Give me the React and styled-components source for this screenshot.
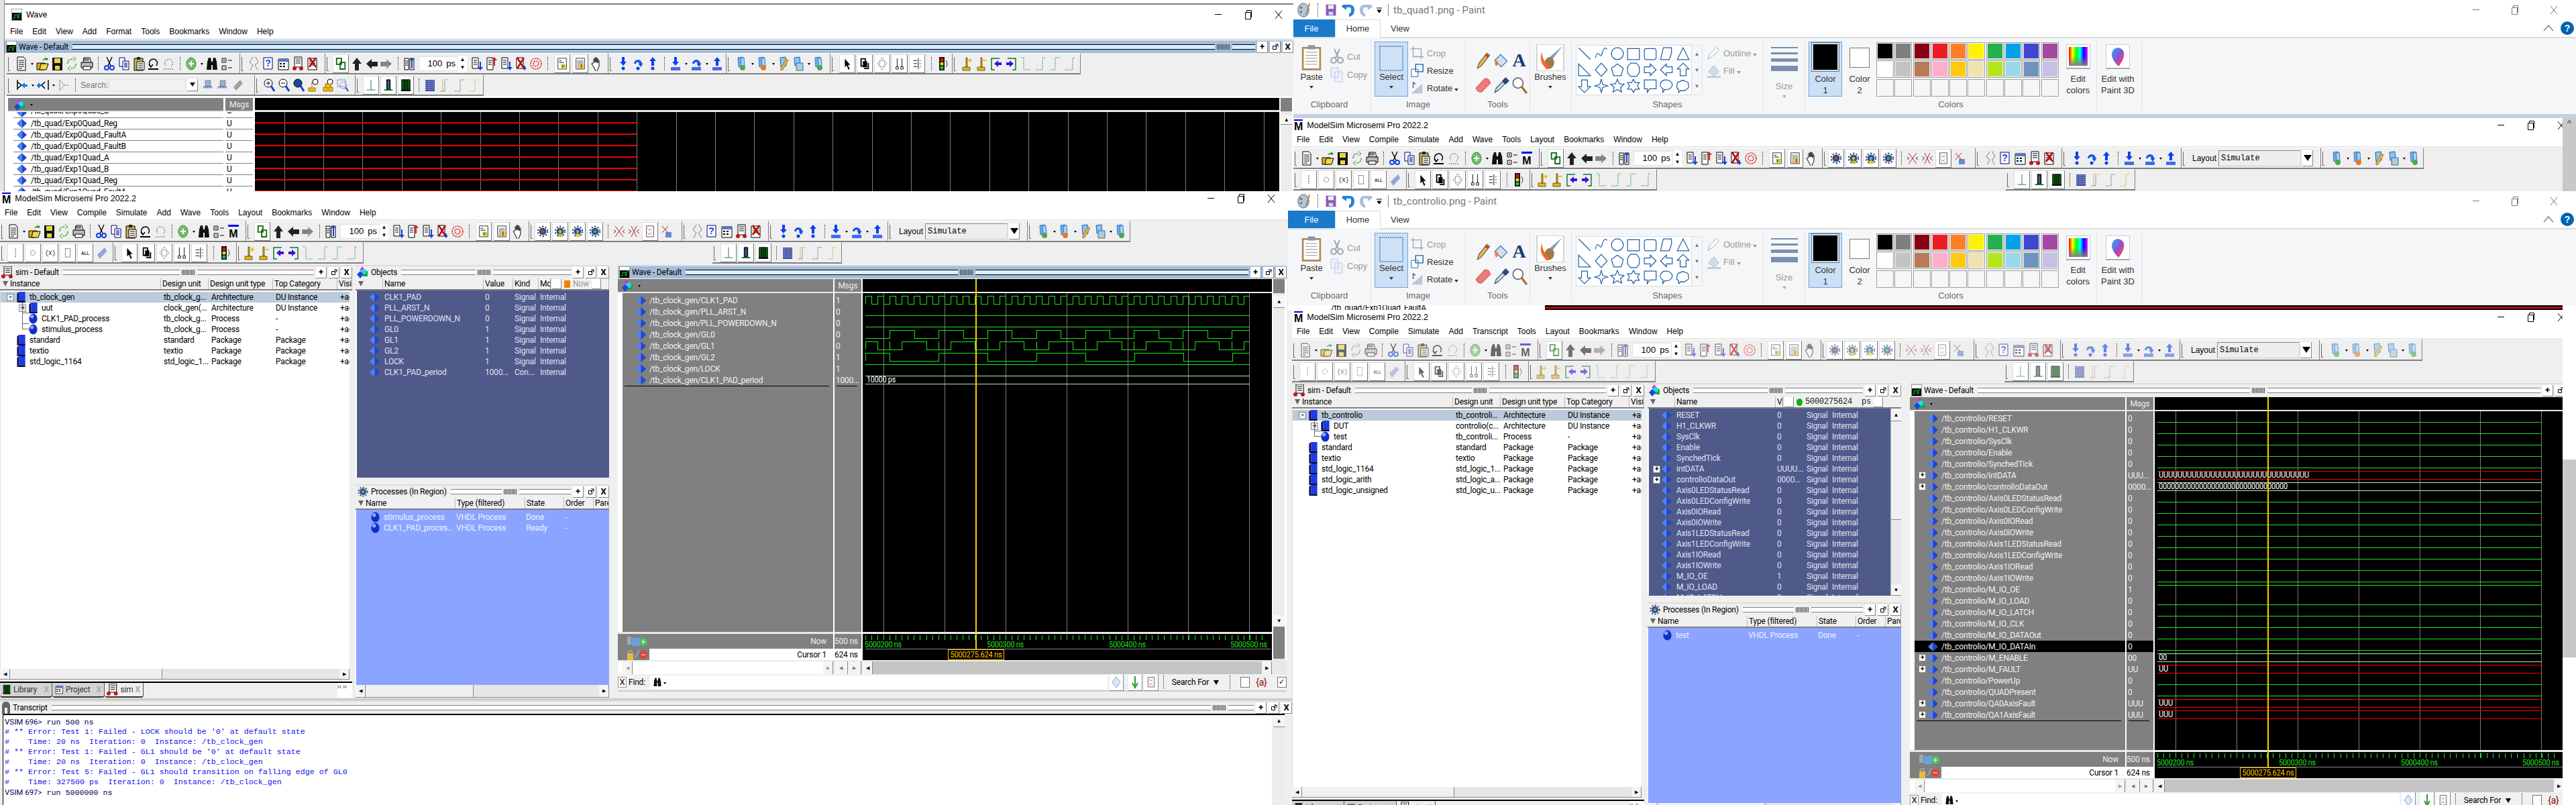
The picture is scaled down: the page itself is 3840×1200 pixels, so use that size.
import React from "react";
import styled, { createGlobalStyle, css } from "styled-components";

const Global = createGlobalStyle`
  html, body { margin: 0; padding: 0; background: #fff; }
  body { font-family: "Liberation Sans", Arial, sans-serif; font-size: 12px; color: #000; }
`;

// narrower list text, like the Windows UI font in the picture
const listFont = css`
  font-family: Roboto, "Liberation Sans", sans-serif;
  font-size: 12px;
  letter-spacing: -0.2px;
`;

/* ---------- toolbar icons (20x22 drawings) ---------- */
const gear = (c, b) => (
  <g>
    <circle cx="10" cy="11" r="6" fill="#2f4f7f" />
    <circle cx="10" cy="11" r="8" fill="none" stroke="#2f4f7f" strokeWidth="2.4" strokeDasharray="2.6 2.6" />
    <circle cx="10" cy="11" r="2.5" fill={c} />
    {b && <path d="M10 13l5 7H5z" fill={b} />}
  </g>
);
const step = (d, extra) => (
  <g>
    {d === "o" ? (
      <path d="M4 11a6 6 0 1 1 12 0l2-1-4 6-4-6 2 1a2.500 2.500 0 0 0-5 0z" fill="#1550e8" />
    ) : d === "d" ? (
      <path d="M10 14l-5-6h3V1h4v7h3z" fill="#0a3ff0" />
    ) : (
      <path d="M10 1l5 6h-3v7H8V7H5z" fill="#0a3ff0" />
    )}
    {extra ? <path d="M3 16h14v5H3z" fill="#0a3ff0" opacity=".75" /> : <circle cx="10" cy="18" r="2.5" fill="#0a3ff0" />}
  </g>
);
const flag = (p) => (
  <g fill="#e8b800" stroke="#111" strokeWidth=".6">
    <path d="M9 2h2v14H9z" />
    <path d="M4 16h11v5H4z" />
    <path d={p} fill="none" stroke="#e8b800" strokeWidth="1.6" />
  </g>
);
const bookmark = (badge) => (
  <g>
    <path d="M4 2l7-1 1 14-7 1z" fill="#6eb0ea" stroke="#1c5fb0" strokeWidth=".8" />
    <path d="M8 3l5-1 1 13-5 1z" fill="#a9d2f5" stroke="#1c5fb0" strokeWidth=".8" />
    <circle cx="11" cy="17" r="4" fill={badge} />
  </g>
);
const dashes = (c, d) => <path d={d} fill="none" stroke={c} strokeDasharray="1.5 1.5" />;

const icons = {
  doc: <g><path d="M4 1h9l3 3v17H4z" fill="#fff" stroke="#000" /><path d="M6 6h8M6 9h8M6 12h8M6 15h8M6 18h5" stroke="#000" /></g>,
  open: <g><path d="M2 10h12l-2 10H2z" fill="#d8b018" stroke="#000" /><path d="M6 20l2-9h11l-3 9z" fill="#f6d648" stroke="#000" /><path d="M10 7q2-5 6-4l-1-2 4 3-4 3 1-2q-3-1-6 2z" fill="#1a8f1a" /></g>,
  save: <g><path d="M3 2h15v19H3z" fill="#111" /><path d="M6 3h9v7H6z" fill="#e8d44a" /><path d="M7 14h7v6H7z" fill="#e8d44a" /></g>,
  reload: <g fill="none" stroke="#55a94f" strokeWidth="2" strokeDasharray="2 1"><path d="M4 11q0-7 8-7" /><path d="M16 11q0 7-8 7" /><path d="M12 1l4 3-4 3M8 15l-4 3 4 3" strokeWidth="1.5" /></g>,
  print: <g><path d="M6 2h9l2 7H5z" fill="#fff" stroke="#000" /><path d="M2 9h17v8H2z" fill="#bbb" stroke="#000" /><path d="M5 15h11v5H5z" fill="#fff" stroke="#000" /><path d="M5 4h9M5 6h9" stroke="#000" /></g>,
  cut: <g fill="none"><path d="M6 1l6 13M14 1l-6 13" stroke="#000" strokeWidth="1.4" /><circle cx="6" cy="17" r="3" stroke="#1240e0" strokeWidth="2" /><circle cx="14" cy="17" r="3" stroke="#1240e0" strokeWidth="2" /></g>,
  copy: <g><path d="M3 2h8v13H3z" fill="#fff" stroke="#000080" /><path d="M8 7h9v13H8z" fill="#fff" stroke="#000080" /><path d="M10 10h5M10 12h5M10 14h5M10 16h5" stroke="#000080" /></g>,
  paste: <g><path d="M3 3h13v18H3z" fill="#c8b050" stroke="#000" /><path d="M7 1h5v4H7z" fill="#222" /><path d="M7 8h11v12H7z" fill="#fff" stroke="#000" /><path d="M9 11h7M9 14h7M9 17h7" stroke="#000" /></g>,
  undo: <g fill="none" stroke="#000" strokeWidth="1.5"><path d="M6 15a6 6 0 1 1 8-1" /><path d="M2 19h15" strokeWidth="2" /><path d="M3 12l3 4 3-4" /></g>,
  redo: <g fill="none" stroke="#333" strokeDasharray="1.5 1.5"><path d="M14 15a6 6 0 1 0-8-1" /><path d="M3 19h15" /></g>,
  plusc: <g><ellipse cx="10" cy="11" rx="7" ry="9" fill="#72c06a" stroke="#2f8a2a" /><path d="M6 11h8M10 7v8" stroke="#fff" strokeWidth="2" /></g>,
  binoc: <g fill="#111"><path d="M3 8l2-6h3l1 6v12H2z" /><path d="M17 8l-2-6h-3l-1 6v12h7z" /><path d="M9 8h2v5H9z" /></g>,
  hier: <g fill="none" stroke="#000"><path d="M3 3h6v6H3zM3 14h6v6H3zM12 6h6M12 17h6M5 6h2M6 5v2M5 17h2" /></g>,
  mlogo: <g><path d="M2 1h16v3H2z" fill="#0000e0" /><text x="10" y="20" fontSize="16" fontWeight="700" textAnchor="middle" fontFamily="Liberation Sans">M</text></g>,
  chain: <g fill="none" stroke="#0a6a0a" strokeWidth="2"><path d="M3 2h8v10H3z" /><path d="M9 9h8v11H9z" /></g>,
  up: <path d="M10 2l7 9h-4v10H7V11H3z" fill="#222" />,
  left: <path d="M2 11l8-7v4h9v7h-9v4z" fill="#222" />,
  right: <g><path d="M18 11l-8-7v4H1v7h9v4z" fill="#999" /><path d="M2 9h14M2 11h16M2 13h14" stroke="#444" strokeDasharray="1 1" /></g>,
  split: <g><path d="M3 3h6v17H3z" fill="#fff" stroke="#000" /><path d="M11 3h6v17h-6z" fill="#fff" stroke="#000" /><path d="M4 7h4M4 10h4M4 13h4" stroke="#000" /><path d="M14 2l3 4h-6zM13 6h2v12h-2z" fill="#1240e0" /></g>,
  bd: <g><path d="M3 2h9v16H3z" fill="#fff" stroke="#000" /><path d="M5 6h5M5 9h5M5 12h5" stroke="#000" /><path d="M14 8h2v8h3l-4 5-4-5h3z" fill="#1240e0" /></g>,
  bu: <g><path d="M3 2h9v18H3z" fill="#fff" stroke="#000" /><path d="M5 6h5M5 9h5M5 12h5" stroke="#000" /><path d="M14 1l4 5h-3v8h-2V6h-3z" fill="#e02020" /></g>,
  bx: <g><path d="M3 2h10v16H3z" fill="#fff" stroke="#000" /><path d="M4 2l10 16M14 2L4 18" stroke="#c00000" strokeWidth="2.4" /><path d="M14 14h2v3h2l-3 4-3-4h2z" fill="#1240e0" /></g>,
  rd: <g fill="none" stroke="#e02020" strokeWidth="1.5" strokeDasharray="2 1"><circle cx="10" cy="11" r="8" /><circle cx="10" cy="11" r="4" /></g>,
  hat1: <g><path d="M3 2h14v18H3z" fill="#fff" stroke="#222" /><path d="M5 6h4M5 9h8" stroke="#000" /><path d="M8 12h8v6H8z" fill="#e6c020" /><path d="M10 13h2v5h-2z" fill="#28a028" /></g>,
  hat2: <g><path d="M3 2h14v18H3z" fill="#fff" stroke="#222" /><path d="M5 5h10v14H5z" fill="#888" opacity=".6" /><path d="M8 12h8v6H8z" fill="#e6d020" /><path d="M11 12h2v6h-2z" fill="#d03030" /></g>,
  hand: <g><path d="M6 10V4h2v5-7h2v7-6h2v7-4h2v9l-4 9-4-8-3-5 2-1z" fill="#fff" stroke="#000" /></g>,
  gr: gear("#c23838"),
  gy: gear("#e0c020", "#d8b818"),
  gy2: gear("#7fa0c0", "#e8c820"),
  gg: gear("#3fb060"),
  xx1: <g fill="none" stroke="#c02020"><path d="M4 3l6 8 6-8M4 19l6-8 6 8" /><path d="M2 9l3 2-3 2M18 9l-3 2 3 2" stroke="#444" /></g>,
  xx2: <g fill="none" stroke="#c02020"><path d="M6 3l4 8-4 8M14 3l-4 8 4 8" /><path d="M2 8l4 3-4 3M18 8l-4 3 4 3" stroke="#444" /></g>,
  docx: <g><path d="M4 2h12v18H4z" fill="#fff" stroke="#444" /><path d="M6 6l7 4M13 6l-7 4M6 13l7 4M13 13l-7 4" stroke="#c02020" strokeDasharray="1 1" /></g>,
  hatx: <g><path d="M4 3l9 10M13 3L4 13" stroke="#c02020" /><path d="M9 12h9v8H9z" fill="#3060c0" opacity=".7" /></g>,
  sig: <g fill="none" stroke="#333" strokeDasharray="1.5 1"><path d="M9 1l-5 8 5 4-4 8M13 1l4 8-5 4 5 8" /></g>,
  help: <g><path d="M3 2h13v17H3z" fill="#fff" stroke="#000080" /><text x="9.500" y="15" fontSize="14" fontWeight="700" fill="#1240e0" textAnchor="middle" fontFamily="Liberation Sans">?</text></g>,
  cal: <g><path d="M3 4h15v16H3z" fill="#fff" stroke="#000" /><path d="M3 4h15v4H3z" fill="#5a78c8" /><path d="M5 11h3M10 11h3M5 15h3M10 15h3" stroke="#000" strokeWidth="2" /></g>,
  run: <g><path d="M5 1h11v15H5z" fill="#fff" stroke="#000" /><path d="M7 4h7M7 7h7M7 10h7" stroke="#000" /><circle cx="5" cy="18" r="3" fill="#c01818" /><circle cx="15" cy="18" r="3" fill="#c01818" /></g>,
  delx: <g><path d="M3 3h13v17H3z" fill="#fff" stroke="#000" /><path d="M5 7h9M5 10h9M5 13h9" stroke="#000" /><path d="M5 2l10 14M15 2L5 16" stroke="#c00000" strokeWidth="2.4" /></g>,
  stepd: step("d"), stepo: step("o"), stepu: step("u"),
  stepd2: step("d", true), stepo2: step("o", true), stepu2: step("u", true),
  pl1: bookmark("#4aa84a"), pl2: bookmark("#e87820"), pl5: bookmark("#4aa84a"),
  pl3: <g><path d="M5 2l8-1 1 13-8 2z" fill="#8cc4f0" stroke="#1c5fb0" /><path d="M14 4l3 2-8 14-3 1 0-3z" fill="#e8b848" stroke="#a07010" /></g>,
  pl4: <g><path d="M4 2l8-1 1 12-8 1z" fill="#8cc4f0" stroke="#1c5fb0" /><path d="M7 10h10v11H7z" fill="#a8c8f0" stroke="#3a6ab0" /><path d="M9 17h6v3H9z" fill="#c0e060" /></g>,
  arrow: <path d="M6 3l9 10-4 0 3 7-2 1-3-7-3 3z" fill="#000" />,
  bracket: <g fill="none" stroke="#000" strokeWidth="2"><path d="M4 3h7v12H4z" /><path d="M8 8h5v8H8z" fill="#000" /><path d="M16 10v9H9" /></g>,
  move: <g fill="none" stroke="#333" strokeDasharray="1 1"><path d="M10 1l4 5h-8zM10 21l4-5H6zM2 11l4-4v8zM18 11l-4-4v8z" /></g>,
  bars: <g fill="none" stroke="#000"><path d="M6 2v14M14 2v14M4 16h4v4H4zM12 16h4v4h-4z" /></g>,
  grid: <g fill="none" stroke="#000"><path d="M12 2v18M4 6h6M4 11h6M4 16h6" /><path d="M14 6h3M14 11h3M14 16h3" strokeDasharray="1 1" /></g>,
  traffic: <g><path d="M5 1h8v20H5z" fill="#111" /><circle cx="9" cy="5" r="2.6" fill="#e01010" /><circle cx="9" cy="11" r="2.6" fill="#e0d020" /><circle cx="9" cy="17" r="2.6" fill="#20c030" /><path d="M15 6q4 5 0 10" fill="none" stroke="#333" /></g>,
  flagp: flag("M11 6h7M15 3v6"),
  flagm: flag("M11 6h7"),
  bl: <g><path d="M15 3H3v17h5" fill="none" stroke="#0a7a2a" strokeWidth="1.5" /><path d="M7 11l6-5v3h5v4h-5v3z" fill="#3a10d8" /></g>,
  br: <g><path d="M5 3h12v17h-5" fill="none" stroke="#0a7a2a" strokeWidth="1.5" /><path d="M14 11L8 6v3H3v4h5v3z" fill="#3a10d8" /></g>,
  d1: dashes("#0a8a2a", "M3 2h4v18h10"),
  d2: dashes("#0a8a2a", "M17 2h-4v18H3"),
  d3: dashes("#0a8a2a", "M3 20h7V2h7"),
  d4: dashes("#0a8a2a", "M3 20h11V2h3"),
  pin: <path d="M10 4v14" stroke="#000" strokeDasharray="2 2" />,
  circ: <circle cx="10" cy="11" r="4" fill="none" stroke="#333" strokeDasharray="1.5 1" />,
  curly: <text x="10" y="15" fontSize="10" textAnchor="middle" fontFamily="Liberation Mono" fill="#222">{"{X}"}</text>,
  rectd: <path d="M6 4h8v14H6z" fill="none" stroke="#333" strokeDasharray="1.5 1" />,
  all: <text x="10" y="14" fontSize="7" fontWeight="700" textAnchor="middle" fontFamily="Liberation Sans" fill="#333">ALL</text>,
  hatch: <g><path d="M4 14L15 3l3 5-10 12z" fill="#8aa8e8" /><path d="M5 13l10-9M7 15l10-9M9 18l9-9" stroke="#d080a0" strokeDasharray="1 1" /></g>,
  ins: <g><path d="M3 3v15M3 6l6 5-6 5z" stroke="#000" strokeWidth="1.5" fill="none" /><path d="M9 11l5-4v3h4v3h-4v3z" fill="#0a7af0" /></g>,
  del: <g><path d="M18 3v15" stroke="#000" strokeWidth="1.5" /><path d="M13 6l-5 5 5 5" stroke="#000" strokeWidth="1.5" fill="none" /><path d="M8 11l-5-4v3H1v3h2v3z" fill="#0a7af0" /></g>,
  addd: <g fill="none" stroke="#444" strokeDasharray="1 1"><path d="M4 3l7 8-7 8zM11 11h7" /></g>,
  srch1: <g><path d="M6 4h8v9H6z" fill="#9ab0d0" stroke="#445" strokeDasharray="1 1" /><path d="M3 14h14" stroke="#2a60d0" strokeWidth="3" strokeDasharray="1 1" /></g>,
  srch3: <g><path d="M4 14L14 3l4 5L8 19z" fill="#a8a8a8" /><path d="M5 14l9-9M7 17l9-9" stroke="#555" strokeDasharray="1 1" /></g>,
  zin: <g><circle cx="9" cy="8" r="6" fill="#fff" stroke="#000" /><path d="M6 8h6M9 5v6" stroke="#000" /><path d="M13 12l5 8" stroke="#1240e0" strokeWidth="3" /></g>,
  zout: <g><circle cx="9" cy="8" r="6" fill="#fff" stroke="#000" /><path d="M6 8h6" stroke="#000" /><path d="M13 12l5 8" stroke="#1240e0" strokeWidth="3" /></g>,
  zfull: <g><circle cx="9" cy="8" r="6" fill="#1a4aa0" stroke="#000" /><path d="M13 12l5 8" stroke="#1240e0" strokeWidth="3" /></g>,
  zc1: <g><circle cx="13" cy="6" r="4" fill="#fff" stroke="#000" /><path d="M8 6v9M3 15h10v5H3z" fill="#f0c000" stroke="#a07000" /></g>,
  zc2: <g><circle cx="13" cy="6" r="4" fill="#fff" stroke="#000" /><path d="M3 14h6v6H3zM11 14h6v6h-6zM6 14V9h8v5" fill="#f0c000" stroke="#a07000" /></g>,
  zs: <g fill="none" stroke="#1240a0" strokeDasharray="1 1"><path d="M2 3h12v10H2z" /><circle cx="11" cy="11" r="5" /><path d="M14 14l4 6" strokeDasharray="none" strokeWidth="2" /></g>,
  lines1: <path d="M10 2v17M3 19h14" stroke="#0a7a2a" />,
  lines2: <g><path d="M7 2h6v17H7z" fill="#1a1a70" stroke="#000" /><path d="M9 4h2v13H9z" fill="#3a8a40" /><path d="M3 19h14" stroke="#0a7a2a" strokeWidth="2" /></g>,
  lines3: <g><path d="M3 2h14v17H3z" fill="#0a5a10" stroke="#000" /><path d="M7 2v17M10 2v17M13 2v17" stroke="#000" /><path d="M2 20h16" stroke="#000" strokeWidth="2" /></g>,
  dith: <g><path d="M3 3h14v17H3z" fill="#3a4aa0" /><path d="M3 5h14M3 8h14M3 11h14M3 14h14M3 17h14" stroke="#fff" strokeDasharray="1 1" /></g>,
  w1: <g><path d="M3 20h4V3h9" fill="none" stroke="#c0a000" strokeDasharray="1.5 1" /><path d="M6 20h4V5" fill="none" stroke="#2040a0" strokeDasharray="1 1" /></g>,
  w2: dashes("#0a7a2a", "M3 20h8V3h6"),
  w3: dashes("#b8a800", "M3 20h8V3h6"),
};

const I = ({ n, s = 20 }) => (
  <svg width={s} height={(s * 22) / 20} viewBox="0 0 20 22">
    {icons[n]}
  </svg>
);

/* small drawings used in lists and panels */
const Diamond = () => (
  <svg width="15" height="14" viewBox="0 0 15 14">
    <path d="M7.500 0L0 7l7.500 7z" fill="#4c82f4" />
    <path d="M7.500 0L15 7l-7.500 7z" fill="#2246c8" />
  </svg>
);
const BlockIco = () => (
  <svg width="13" height="16" viewBox="0 0 13 17">
    <path d="M0 3l3-3v14l-3 3z" fill="#101050" />
    <path d="M3 0h10v14H3z" fill="#1c3ce8" />
    <path d="M0 17l3-3h10v3z" fill="#0a0a40" />
  </svg>
);
const BallIco = () => (
  <svg width="13" height="16" viewBox="0 0 13 17">
    <ellipse cx="6.500" cy="8.500" rx="6.500" ry="8" fill="#1030c8" />
    <ellipse cx="4.500" cy="5" rx="3" ry="3" fill="#8aa4ff" />
  </svg>
);
const ObjsIco = () => (
  <svg width="18" height="18" viewBox="0 0 18 18">
    <path d="M8 0l4 6H4z" fill="#e020e0" />
    <path d="M9 7h7v8H9z" fill="#18a838" />
    <circle cx="10" cy="8" r="4" fill="#20d8e8" />
    <path d="M5 7l5 5-5 6-5-6z" fill="#1848e0" />
  </svg>
);
const WaveIco = () => (
  <svg width="16" height="18" viewBox="0 0 16 18">
    <path d="M0 0h16v18H0z" fill="#fff" stroke="#444" />
    <path d="M1 6h14v11H1z" fill="#000" />
    <path d="M2 14h3V9h4v5h2V8h3" fill="none" stroke="#18d838" />
  </svg>
);
const SimIco = () => (
  <svg width="18" height="18" viewBox="0 0 18 18">
    <path d="M4 0h11v13H4z" fill="#fff" stroke="#000" />
    <path d="M6 3h7M6 6h7M6 9h7" stroke="#000" />
    <circle cx="3" cy="15" r="3" fill="#c01818" />
    <circle cx="14" cy="15" r="3" fill="#c01818" />
  </svg>
);
const GearIco = () => (
  <svg width="18" height="18" viewBox="0 0 20 22">
    {gear("#8aa")}
  </svg>
);
const PersonIco = () => (
  <svg width="14" height="18" viewBox="0 0 14 18">
    <path d="M1 18V6q0-6 6-6t6 6v12H9V9H5v9z" fill="#666" />
  </svg>
);

/* ---------- desktop and windows ---------- */
const Desktop = styled.div`
  position: relative;
  width: 3840px;
  height: 1200px;
  overflow: hidden;
  background: #fff;
`;
const Win = styled.div`
  position: absolute;
  left: ${(p) => p.$x}px;
  top: ${(p) => p.$y}px;
  width: ${(p) => p.$w}px;
  height: ${(p) => p.$h}px;
  background: ${(p) => p.$bg || "#fff"};
  display: flex;
  flex-direction: column;
  overflow: hidden;
`;
const Sliver = styled.div`
  position: absolute;
  left: 0;
  top: 0;
  width: 7px;
  height: 285px;
  background: #e4e4e4;
  border-right: 1px solid #888;
  box-sizing: border-box;
`;
const SideStrip = styled.div`
  position: absolute;
  left: 3820px;
  top: ${(p) => p.$y}px;
  width: 20px;
  height: ${(p) => p.$h}px;
  background: ${(p) => p.$c};
  color: #333;
  font-size: 13px;
  text-align: center;
`;
const TitleRow = styled.div`
  flex: none;
  height: ${(p) => p.$h}px;
  display: flex;
  align-items: center;
  padding-left: ${(p) => p.$pl}px;
  padding-right: ${(p) => p.$pr}px;
  background: #fff;
  border-top: ${(p) => (p.$line ? "2px solid #808080" : "none")};
`;
const TitleText = styled.span`
  font-size: 12.500px;
  margin-left: 6px;
  white-space: nowrap;
`;
const MLogo = styled.span`
  font-weight: 700;
  font-size: 16px;
  line-height: 17px;
  border-top: 2px solid #0000e0;
`;
const Controls = styled.div`
  margin-left: auto;
  display: flex;
`;
const CtlBtn = styled.span`
  width: ${(p) => p.$w}px;
  display: flex;
  justify-content: center;
`;
const WinControls = ({ w = 45, c = "#000" }) => (
  <Controls>
    <CtlBtn $w={w}>
      <svg width="12" height="12"><path d="M1 6.500h10" stroke={c} /></svg>
    </CtlBtn>
    <CtlBtn $w={w}>
      <svg width="12" height="14"><path d="M1.500 3.500h8v10h-8zM3.500 3.500v-3h7v10h-1" fill="none" stroke={c} /></svg>
    </CtlBtn>
    <CtlBtn $w={w}>
      <svg width="12" height="14"><path d="M1 1l10 12M11 1L1 13" stroke={c} /></svg>
    </CtlBtn>
  </Controls>
);
const MenuRow = styled.div`
  flex: none;
  height: ${(p) => p.$h}px;
  display: flex;
  align-items: center;
  gap: 14px;
  padding-left: ${(p) => p.$pl}px;
  background: #fff;
  border-bottom: 2px solid #e8e8e8;
  box-sizing: border-box;
`;

/* ---------- toolbars ---------- */
const ToolRow = styled.div`
  flex: none;
  height: 32px;
  display: flex;
  padding-left: ${(p) => p.$pl || 0}px;
  background: #efefef;
`;
const ToolGroup = styled.div`
  flex: none;
  width: ${(p) => p.$w}px;
  margin-left: ${(p) => p.$ml || 0}px;
  box-sizing: border-box;
  padding-left: ${(p) => p.$pad}px;
  display: flex;
  align-items: center;
  position: relative;
  border-right: 1px solid #808080;
  border-bottom: 2px solid #808080;
  border-top: 1px solid #fff;
  &::before {
    content: "";
    position: absolute;
    left: 2px;
    top: 5px;
    bottom: 3px;
    width: 2px;
    border-left: 1px solid #666;
    border-bottom: 1px solid #666;
  }
  svg { opacity: ${(p) => (p.$dim ? 0.6 : 1)}; }
`;
const Slot = styled.span`
  flex: none;
  width: ${(p) => p.$w || 22}px;
  height: 24px;
  display: flex;
  align-items: center;
  justify-content: center;
`;
const BoxSlot = styled(Slot)`
  width: 26px;
  & > div {
    width: 22px;
    height: 26px;
    background: #fff;
    display: flex;
    align-items: center;
    justify-content: center;
    border-right: 1px solid #777;
    border-bottom: 1px solid #777;
    border-top: 1px solid #ddd;
    border-left: 1px solid #ddd;
  }
`;
const Sep = styled.span`
  flex: none;
  width: ${(p) => p.$w || 12}px;
  height: 20px;
  display: flex;
  justify-content: center;
  &::after {
    content: "";
    border-left: 1px dotted #333;
  }
`;
const Gap = styled.span`
  flex: none;
  width: ${(p) => p.$w}px;
`;
const Drop = styled.span`
  flex: none;
  width: 9px;
  display: flex;
  justify-content: center;
  &::after {
    content: "";
    border-left: 2.500px solid transparent;
    border-right: 2.500px solid transparent;
    border-top: 3px solid #000;
    margin-top: 2px;
  }
`;
const TimeBox = styled.span`
  flex: none;
  width: 59px;
  height: 22px;
  background: #fff;
  box-sizing: border-box;
  border: 1px solid #e0e0e0;
  display: flex;
  align-items: center;
  justify-content: flex-end;
  padding-right: 3px;
  font-size: 13px;
  gap: 6px;
`;
const Spin = styled.span`
  flex: none;
  width: 13px;
  height: 24px;
  display: flex;
  flex-direction: column;
  align-items: center;
  justify-content: space-around;
  background: #fff;
  font-size: 8px;
  line-height: 10px;
`;
const LayoutLabel = styled.span`
  margin-left: 16px;
  margin-right: 5px;
  font-size: 12px;
  width: 34px;
`;
const LayoutBox = styled.span`
  flex: none;
  width: 123px;
  height: 24px;
  box-sizing: border-box;
  border: 1px solid #ccc;
  border-top-color: #888;
  border-left-color: #888;
  background: #eee;
  font-family: "Liberation Mono", monospace;
  font-size: 12px;
  display: flex;
  align-items: center;
  padding-left: 3px;
`;
const DropBtn = styled.span`
  flex: none;
  width: 16px;
  height: 24px;
  margin-left: 2px;
  background: #fff;
  box-sizing: border-box;
  border-right: 1px solid #888;
  border-bottom: 1px solid #888;
  display: flex;
  align-items: center;
  justify-content: center;
  &::after {
    content: "";
    border-left: 6px solid transparent;
    border-right: 6px solid transparent;
    border-top: 9px solid #000;
  }
`;
const SearchLabel = styled.span`
  color: #777;
  margin-left: 2px;
  width: 42px;
`;
const SearchBox = styled.span`
  flex: none;
  width: 115px;
  height: 18px;
  background: #f2f2f2;
  border: 1px solid #ddd;
  box-sizing: border-box;
`;
const SearchDrop = styled(DropBtn)`
  width: 16px;
  height: 18px;
  margin-right: 4px;
  &::after {
    border-left-width: 4px;
    border-right-width: 4px;
    border-top-width: 6px;
  }
`;

// "name" icon, "*name" boxed icon, "|" separator, "v" dropdown, "_n" spacer
const Item = ({ t }) => {
  if (t === "|") return <Sep />;
  if (t === "v") return <Drop />;
  if (t[0] === "_") return <Gap $w={Number(t.slice(1))} />;
  if (t === "time")
    return (
      <>
        <TimeBox><span>100</span><span>ps</span></TimeBox>
        <Spin><span>▲</span><span>▼</span></Spin>
      </>
    );
  if (t === "layout")
    return (
      <>
        <LayoutLabel>Layout</LayoutLabel>
        <LayoutBox>Simulate</LayoutBox>
        <DropBtn />
      </>
    );
  if (t === "search")
    return (
      <>
        <SearchLabel>Search:</SearchLabel>
        <SearchBox />
        <SearchDrop />
      </>
    );
  if (t[0] === "*")
    return <BoxSlot><div><I n={t.slice(1)} s={18} /></div></BoxSlot>;
  return <Slot><I n={t} /></Slot>;
};
const Tools = ({ rows, pl, dim }) =>
  rows.map((groups, r) => (
    <ToolRow key={r} $pl={pl}>
      {groups.map((g, i) => (
        <ToolGroup key={i} $w={g[0]} $pad={g[1]} $ml={g[3]} $dim={dim}>
          {g[2].split(" ").map((t, k) => <Item key={k} t={t} />)}
        </ToolGroup>
      ))}
    </ToolRow>
  ));

const commonG2 = "*chain up left right | split _3 time _4 bd bu bd bx rd | _3 *hat1 _1 *hat2 hand";
const commonG5 = "stepd stepo stepu | stepd2 v stepo2 v stepu2";
const mainTools = [
  [
    [367, 9, "doc v open save reload print | cut copy paste undo redo | plusc v binoc hier mlogo"],
    [422, 11, commonG2],
    [228, 7, "*gr *gy *gy2 *gg | xx1 xx2 *docx hatx"],
    [129, 11, "sig help cal run delx"],
    [178, 11, commonG5],
    [208, 0, "layout"],
    [153, 13, "pl1 v pl2 v pl3 pl4 v pl5"],
  ],
  [
    [169, 10, "*pin *circ *curly *rectd *all hatch"],
    [184, 11, "*arrow *bracket *move *bars *grid _2 | traffic"],
    [189, 7, "flagp flagm bl br d1 d2 d3 d4"],
    [193, 11, "*lines1 *lines2 *lines3 | dith w1 w2 w3", 520],
  ],
];
const waveTools = [
  [
    [348, 11, "doc v open save reload print | cut copy paste undo redo | plusc v binoc hier"],
    [127, 9, "sig help cal run delx"],
    [422, 10, commonG2],
    [176, 11, commonG5],
    [155, 12, "pl1 v pl2 v pl3 pl4 v pl5"],
    [182, 12, "*arrow *bracket *move *bars *grid _2 | traffic"],
    [191, 10, "flagp flagm bl br d1 d2 d3 d4"],
  ],
  [
    [370, 12, "ins v del v addd | search srch1 srch1 srch3"],
    [150, 10, "zin zout zfull zc1 zc2 zs"],
    [191, 10, "*lines1 *lines2 *lines3 | dith w1 w2 w3"],
  ],
];

/* ---------- dock panels ---------- */
const PanelHeadBar = styled.div`
  flex: none;
  height: 20px;
  display: flex;
  align-items: center;
  gap: 3px;
  background: ${(p) => (p.$active ? "#a3bcd8" : "#efefef")};
  border-top: 2px solid ${(p) => (p.$active ? "#d0dcea" : "#ddd")};
  box-sizing: border-box;
  padding-left: 2px;
  ${listFont}
`;
const HeadTitle = styled.span`
  white-space: nowrap;
  margin-right: 3px;
`;
const GripLines = styled.span`
  flex: ${(p) => p.$f || 1};
  height: 6px;
  border-top: 1px solid ${(p) => (p.$active ? "#000" : "#808080")};
  border-bottom: 1px solid ${(p) => (p.$active ? "#000" : "#808080")};
  background: ${(p) => (p.$active ? "#d8f0ff" : "#fff")};
`;
const GripDots = styled.span`
  flex: none;
  width: 20px;
  height: 8px;
  background: repeating-linear-gradient(90deg, #444 0 1px, transparent 1px 2px);
`;
const HeadBtn = styled.span`
  flex: none;
  width: 15px;
  height: 16px;
  background: #fff;
  display: flex;
  align-items: center;
  justify-content: center;
  font-size: 13px;
  font-weight: 700;
  line-height: 14px;
  border-right: 1px solid #888;
  border-bottom: 1px solid #888;
`;
const PanelHead = ({ icon, title, active, f1 = 1, f2 = 1 }) => (
  <PanelHeadBar $active={active}>
    {icon}
    <HeadTitle>{title}</HeadTitle>
    <GripLines $active={active} $f={f1} />
    <GripDots />
    <GripLines $active={active} $f={f2} />
    <HeadBtn>+</HeadBtn>
    <HeadBtn>
      <svg width="10" height="10"><path d="M1.500 3.500h5v5h-5zM5 1h4v4M9 1L5 5" fill="none" stroke="#000" /></svg>
    </HeadBtn>
    <HeadBtn>X</HeadBtn>
  </PanelHeadBar>
);

const ColHeadRow = styled.div`
  flex: none;
  height: 16px;
  display: grid;
  grid-template-columns: ${(p) => p.$cols};
  position: relative;
  background: #f0f0f0;
  border-bottom: 2px solid #808080;
  overflow: hidden;
  ${listFont}
`;
const ColCell = styled.span`
  padding-left: 2px;
  line-height: 16px;
  white-space: nowrap;
  overflow: hidden;
  border-right: 1px solid #bbb;
  position: relative;
`;
const FirstCell = styled(ColCell)`
  padding-left: 15px;
  &::before {
    content: "";
    position: absolute;
    left: 4px;
    top: 4px;
    border-left: 4px solid transparent;
    border-right: 4px solid transparent;
    border-top: 8px solid #666;
  }
`;

/* sim panel */
const simCols = "240px 71px 96px 96px 1fr";
const SimCol = styled.div`
  flex: none;
  width: 525px;
  display: flex;
  flex-direction: column;
`;
const SimList = styled.div`
  flex: 1;
  background: #fff;
  padding-top: 2px;
  margin-right: 4px;
  overflow: hidden;
  border-left: 1px solid #ddd;
`;
const SimRow = styled.div`
  height: 16px;
  line-height: 16px;
  display: grid;
  grid-template-columns: ${simCols};
  white-space: nowrap;
  background: ${(p) => (p.$sel ? "#bccbdb" : "transparent")};
  overflow: hidden;
  ${listFont}
`;
const TreeCell = styled.span`
  display: flex;
  align-items: center;
  gap: 6px;
  padding-left: ${(p) => (p.$d === 2 ? 43 : 25) - 1}px;
  position: relative;
`;
const Exp = styled.span`
  position: absolute;
  left: ${(p) => p.$x}px;
  top: 3px;
  width: 9px;
  height: 9px;
  background: #e8eef8;
  border: 1px solid #888;
  font-size: 10px;
  line-height: 8px;
  text-align: center;
  color: #000;
  font-weight: 700;
`;
const TreeLine = styled.span`
  position: absolute;
  left: 32px;
  top: 0;
  width: 10px;
  height: ${(p) => (p.$end ? 8 : 16)}px;
  border-left: 1px solid #666;
  border-bottom: ${(p) => (p.$child ? "1px solid #666" : "none")};
  box-sizing: border-box;
`;
const Cell = styled.span`
  padding-left: 3px;
  overflow: hidden;
`;
const HScrollBar = styled.div`
  flex: none;
  height: ${(p) => p.$h || 15}px;
  display: flex;
  background: #e6e6e6;
  margin: ${(p) => p.$m || "0"};
  border-bottom: 1px solid #888;
`;
const ArrowBtn = styled.span`
  flex: none;
  width: ${(p) => p.$w || 15}px;
  background: ${(p) => p.$bg || "#f4f4f4"};
  border-right: 1px solid #888;
  color: ${(p) => p.$c || "#000"};
  display: flex;
  align-items: center;
  justify-content: center;
  font-size: 7px;
  box-sizing: border-box;
`;
const Thumb = styled.span`
  flex: none;
  width: ${(p) => p.$w}px;
  background: #f0f0f0;
  border-right: 1px solid #888;
`;
const TrackFill = styled.span`
  flex: 1;
`;
const HScroll = ({ thumb, h, m }) => (
  <HScrollBar $h={h} $m={m}>
    <ArrowBtn>◀</ArrowBtn>
    <Thumb $w={thumb} />
    <TrackFill />
    <ArrowBtn>▶</ArrowBtn>
  </HScrollBar>
);
const TabRow = styled.div`
  flex: none;
  height: 24px;
  display: flex;
  margin-top: 3px;
  border-top: 2px solid #000;
  background: #efefef;
  box-sizing: border-box;
  ${listFont}
`;
const Tab = styled.span`
  flex: none;
  width: ${(p) => p.$w}px;
  box-sizing: border-box;
  display: flex;
  align-items: center;
  gap: 3px;
  padding-left: 3px;
  background: ${(p) => (p.$on ? "#efefef" : "#d4d4d4")};
  border-right: 1px solid #555;
  border-bottom: 2px solid #333;
  border-radius: 0 0 4px 4px;
  color: #333;
`;
const TabX = styled.span`
  color: #aaa;
  font-weight: 700;
  margin-left: auto;
  margin-right: 4px;
`;
const TabArrows = styled.span`
  margin-left: auto;
  width: 22px;
  font-size: 10px;
  color: #333;
  background: #fff;
`;

const SimPanel = ({ rows }) => (
  <SimCol>
    <PanelHead icon={<SimIco />} title="sim - Default" f1={5} f2={5} />
    <ColHeadRow $cols={simCols}>
      <FirstCell>Instance</FirstCell>
      <ColCell>Design unit</ColCell>
      <ColCell>Design unit type</ColCell>
      <ColCell>Top Category</ColCell>
      <ColCell>Visi</ColCell>
    </ColHeadRow>
    <SimList>
      {rows.map((r, i) => (
        <SimRow key={i} $sel={r.sel}>
          <TreeCell $d={r.d}>
            {r.sel && <Exp $x={9}>-</Exp>}
            {r.exp && <Exp $x={27}>+</Exp>}
            {r.d === 2 && <TreeLine $child $end={r.end} />}
            {r.ball ? <BallIco /> : <BlockIco />}
            {r.name}
          </TreeCell>
          <Cell>{r.du}</Cell>
          <Cell>{r.type}</Cell>
          <Cell>{r.top}</Cell>
          <Cell>+ac</Cell>
        </SimRow>
      ))}
    </SimList>
    <HScroll thumb={226} m="0 4px 0 0" />
    <TabRow>
      <Tab $w={78}><I n="lines3" s={14} /><span>Library</span><TabX>X</TabX></Tab>
      <Tab $w={78}><I n="cal" s={14} /><span>Project</span><TabX>X</TabX></Tab>
      <Tab $w={58} $on><SimIco /><span>sim</span><TabX>X</TabX></Tab>
      <TabArrows>‹‹ ››</TabArrows>
    </TabRow>
  </SimCol>
);

/* objects + processes */
const objCols = "41px 150px 44px 38px 1fr";
const MidCol = styled.div`
  flex: none;
  width: 378px;
  margin-left: 5px;
  display: flex;
  flex-direction: column;
`;
const ObjPanel = styled.div`
  flex: none;
  height: 317px;
  display: flex;
  flex-direction: column;
  overflow: hidden;
`;
const ProcPanel = styled.div`
  flex: 1;
  margin-top: 10px;
  display: flex;
  flex-direction: column;
  min-height: 0;
`;
const ObjBodyRow = styled.div`
  flex: 1;
  display: flex;
  min-height: 0;
`;
const ObjList = styled.div`
  flex: 1;
  background: #505a8a;
  padding-top: 2px;
  overflow: hidden;
  border-left: 2px solid #fff;
`;
const ObjRow = styled.div`
  height: 16px;
  line-height: 16px;
  display: grid;
  grid-template-columns: ${objCols};
  color: #dfe3f0;
  white-space: nowrap;
  overflow: hidden;
  ${listFont}
`;
const ObjIconCell = styled.span`
  position: relative;
  display: flex;
  align-items: center;
  padding-left: ${(p) => p.$pad}px;
`;
const RowExp = styled(Exp)`
  left: ${(p) => p.$x}px;
  top: 3px;
  background: #fff;
`;
const VBar = styled.div`
  flex: none;
  width: 15px;
  background: #e8e8e8;
  display: flex;
  flex-direction: column;
  border-left: 1px solid #aaa;
`;
const VBtn = styled.span`
  flex: none;
  height: ${(p) => p.$h || 16}px;
  background: ${(p) => p.$bg || "#f6f6f6"};
  border-bottom: 1px solid #888;
  font-size: 8px;
  display: flex;
  align-items: center;
  justify-content: center;
`;
const VFill = styled.span`
  flex: 1;
`;
const Chip = styled.span`
  position: absolute;
  top: 0;
  right: ${(p) => p.$r}px;
  width: ${(p) => p.$w}px;
  height: 16px;
  background: #efefef;
  border-left: 1px solid #888;
  display: flex;
  align-items: center;
  gap: 4px;
  padding: 0 2px;
  box-sizing: border-box;
  color: ${(p) => p.$c};
`;
const ChipBox = styled.span`
  flex: none;
  width: 13px;
  height: 14px;
  background: #fff;
  border-right: 1px solid #888;
  border-bottom: 1px solid #888;
`;
const Dot = styled.span`
  flex: none;
  width: 9px;
  height: 11px;
  border-radius: ${(p) => (p.$round ? "50%" : "1px")};
  background: ${(p) => p.$c};
`;
const ChipText = styled.span`
  flex: 1;
  white-space: pre;
  font-family: ${(p) => (p.$mono ? '"Liberation Mono", monospace' : "inherit")};
`;
const ProcList = styled.div`
  flex: 1;
  background: #8aa4ff;
  padding-top: 3px;
  overflow: hidden;
  border-left: 1px solid #fff;
`;
const ProcRow = styled.div`
  height: 16px;
  line-height: 16px;
  display: grid;
  grid-template-columns: 41px 108px 104px 58px 44px;
  color: #eef2ff;
  white-space: nowrap;
  overflow: hidden;
  ${listFont}
`;

const ObjectsColumn = ({ objects, procs, chip, scroll }) => (
  <MidCol>
    <ObjPanel>
      <PanelHead icon={<ObjsIco />} title="Objects" f1={2.500} f2={2.600} />
      <ColHeadRow $cols={objCols}>
        <FirstCell>&nbsp;</FirstCell>
        <ColCell>Name</ColCell>
        {chip.mono ? (
          <>
            <ColCell>Va</ColCell>
            <Chip $r={30} $w={147} $c="#222">
              <ChipBox /><Dot $round $c="#10b010" />
              <ChipText $mono>{chip.text}</ChipText><ChipBox />
            </Chip>
          </>
        ) : (
          <>
            <ColCell>Value</ColCell>
            <ColCell>Kind</ColCell>
            <ColCell>Mo</ColCell>
            <Chip $r={12} $w={76} $c="#999">
              <ChipBox /><Dot $c="#f08000" /><ChipText>{chip.text}</ChipText><ChipBox />
            </Chip>
          </>
        )}
      </ColHeadRow>
      <ObjBodyRow>
        <ObjList>
          {objects.map((o, i) => (
            <ObjRow key={i}>
              <ObjIconCell $pad={19}>
                {o[2] && <RowExp $x={6}>+</RowExp>}
                <Diamond />
              </ObjIconCell>
              <span>{o[0]}</span>
              <span>{o[1]}</span>
              <span>{o[3] || "Signal"}</span>
              <span>Internal</span>
            </ObjRow>
          ))}
        </ObjList>
        {scroll && (
          <VBar>
            <VBtn $h={18}>▲</VBtn>
            <VBtn $h={146} $bg="#efefef" />
            <VFill />
            <VBtn $h={16}>▼</VBtn>
          </VBar>
        )}
      </ObjBodyRow>
    </ObjPanel>
    <ProcPanel>
      <PanelHead icon={<GearIco />} title="Processes (In Region)" f1={4} f2={4} />
      <ColHeadRow $cols="149px 104px 58px 44px 1fr">
        <FirstCell>Name</FirstCell>
        <ColCell>Type (filtered)</ColCell>
        <ColCell>State</ColCell>
        <ColCell>Order</ColCell>
        <ColCell>Pare</ColCell>
      </ColHeadRow>
      <ProcList>
        {procs.map((p, i) => (
          <ProcRow key={i}>
            <ObjIconCell $pad={22}><BallIco /></ObjIconCell>
            <span>{p[0]}</span>
            <span>VHDL Process</span>
            <span>{p[1]}</span>
            <span>-</span>
          </ProcRow>
        ))}
      </ProcList>
      <HScroll thumb={160} h={18} />
    </ProcPanel>
  </MidCol>
);

/* ---------- wave viewer ---------- */
const GRN = "#1fe01f";
const BUS = "#b0f0b0";
const RED = "#ff0000";
const X0 = 4;
const X1 = 576.600;
const GRID = [31, 122.500, 213, 304, 395.500, 485.500, 576.600];
const CUR = 168.500;
const cy = (i) => 31 + 17 * i;

const square = (i, first, half, startHigh) => {
  const y = cy(i);
  const hi = y - 6;
  const lo = y + 6;
  let level = startHigh;
  let d = `M${X0} ${lo}V${level ? hi : lo}`;
  let x = first;
  while (x < X1) {
    d += `H${x}V${level ? lo : hi}`;
    level = !level;
    x += half;
  }
  return d + `H${X1}`;
};

const Trace = ({ t, i }) => {
  const y = cy(i);
  if (t.k === "low" || t.k === "high") {
    const yy = t.k === "low" ? y + 6 : y - 6;
    return <path d={`M${X0} ${yy}H${X1}`} stroke={GRN} />;
  }
  if (t.k === "wave") {
    return (
      <g>
        <path d={square(i, t.first, t.half, t.high)} fill="none" stroke={GRN} />
        {t.ticks &&
          Array.from({ length: 8 }, (_, k) => 40.800 + 72.800 * k).map((x) => (
            <path key={x} d={`M${x} ${y - 6}V${y + 6}`} stroke={GRN} />
          ))}
      </g>
    );
  }
  const c = t.k === "red" ? RED : BUS;
  return (
    <g>
      <path d={`M${X0} ${y - 6}H${X1}M${X0} ${y + 6}H${X1}`} stroke={c} />
      <text x={6} y={y + 4} fill="#fff" fontSize="12" fontFamily="Roboto" textLength={t.len} lengthAdjust="spacingAndGlyphs" shapeRendering="auto">
        {t.label}
      </text>
    </g>
  );
};

const ticks = Array.from({ length: 66 }, (_, k) => 4 + 9.100 * k);
const WavePlot = ({ traces }) => (
  <svg width="610" height="568" viewBox="0 0 610 568" shapeRendering="crispEdges" style={{ flex: "none", display: "block" }}>
    <rect width="610" height="568" fill="#000" />
    <rect y="19" width="610" height="2" fill="#e8e8e8" />
    {GRID.map((x) => <path key={x} d={`M${x} 21V526`} stroke="#7a7a7a" />)}
    {traces.map((t, i) => <Trace key={i} t={t} i={i} />)}
    <rect y="526" width="610" height="3" fill="#e8e8e8" />
    {ticks.map((x, k) => <path key={k} d={`M${x} 531V538`} stroke={GRN} />)}
    {GRID.map((x) => <path key={x} d={`M${x} 530V538`} stroke={GRN} />)}
    <g fill={GRN} fontSize="12" fontFamily="Roboto" shapeRendering="auto">
      {[[3, "5000200 ns"], [185, "5000300 ns"], [367, "5000400 ns"], [548, "5000500 ns"]].map(([x, s]) => (
        <text key={s} x={x} y="549" textLength="55" lengthAdjust="spacingAndGlyphs">{s}</text>
      ))}
    </g>
    <path d="M4 551.500H608" stroke="#8a8a8a" />
    <rect x={CUR - 1} y="0" width="2" height="552" fill="#ffcc00" />
    <rect x="127.500" y="552.500" width="83" height="15" fill="#000" stroke="#ffc000" />
    <text x="130.500" y="564" fill="#ffc000" fontSize="12" fontFamily="Roboto" textLength="77" lengthAdjust="spacingAndGlyphs" shapeRendering="auto">5000275.624 ns</text>
  </svg>
);

const RightCol = styled.div`
  flex: none;
  width: 1000px;
  margin-left: 10px;
  padding-left: 3px;
  box-sizing: border-box;
  display: flex;
  flex-direction: column;
`;
const WaveBody = styled.div`
  flex: none;
  height: 568px;
  display: flex;
  margin-top: 1px;
  background: #fff;
  ${listFont}
`;
const NameCol = styled.div`
  flex: none;
  width: 321px;
  margin-right: 2px;
  display: flex;
  flex-direction: column;
`;
const MsgCol = styled.div`
  flex: none;
  width: 40px;
  margin-right: 2px;
  display: flex;
  flex-direction: column;
`;
const ColTop = styled.div`
  flex: none;
  height: 19px;
  background: #808080;
  color: #eee;
  display: flex;
  align-items: center;
  justify-content: center;
  border-bottom: 2px solid #e8e8e8;
`;
const NameTop = styled(ColTop)`
  justify-content: flex-start;
  padding-left: 6px;
  gap: 3px;
`;
const ListArea = styled.div`
  flex: none;
  height: 505px;
  padding: 2px 0 0 ${(p) => p.$l}px;
  box-sizing: border-box;
  background: linear-gradient(#fff, #fff) left / ${(p) => p.$l}px 100% no-repeat, #808080;
  overflow: hidden;
  position: relative;
`;
const WaveRow = styled.div`
  height: 17px;
  display: flex;
  align-items: center;
  color: #f2f2f2;
  white-space: nowrap;
  position: relative;
  background: ${(p) => (p.$sel ? "#000" : "transparent")};
`;
const RowIcon = styled.span`
  flex: none;
  width: 40px;
  padding-left: 20px;
  box-sizing: border-box;
  display: flex;
  align-items: center;
`;
const MsgRowText = styled.span`
  padding-left: 2px;
`;
const EndLine = styled.div`
  height: 1px;
  margin: 0 6px 0 3px;
  background: #000;
`;
const FootSep = styled.div`
  flex: none;
  height: 3px;
  background: #e8e8e8;
`;
const NowRow = styled.div`
  flex: none;
  height: 22px;
  background: #808080;
  color: #eee;
  display: flex;
  align-items: center;
  justify-content: flex-end;
  padding-right: 10px;
`;
const CursorRow = styled.div`
  flex: none;
  height: 18px;
  background: linear-gradient(90deg, #808080 47px, #fff 47px);
  display: flex;
  align-items: center;
  justify-content: flex-end;
  padding-right: 10px;
`;
const MsgCursor = styled(CursorRow)`
  background: #fff;
  justify-content: flex-start;
  padding: 0;
`;
const MsgNow = styled(NowRow)`
  justify-content: flex-start;
  padding: 0;
`;
const FootIcons = styled.span`
  margin-right: auto;
  margin-left: 11px;
  display: flex;
`;
const WaveVBar = styled.div`
  flex: none;
  width: 17px;
  margin-left: 2px;
  display: flex;
  flex-direction: column;
  background: #ececec;
`;
const VHead = styled.span`
  flex: none;
  height: ${(p) => p.$h}px;
  background: #808080;
  border-bottom: 2px solid #e8e8e8;
  margin-bottom: ${(p) => p.$mb || 0}px;
`;
const WaveScrollRow = styled.div`
  flex: none;
  height: 21px;
  display: flex;
  padding-top: 2px;
  background: #e8e8e8;
  box-sizing: border-box;
`;
const NameScroll = styled.div`
  flex: none;
  width: ${(p) => p.$w}px;
  margin-right: 2px;
  display: flex;
  padding-left: ${(p) => p.$pl || 0}px;
  box-sizing: border-box;
  background: #fff;
`;
const DarkTrack = styled.span`
  flex: 1;
  background: #c4c4c4;
`;
const FindRow = styled.div`
  flex: none;
  height: 26px;
  display: flex;
  align-items: center;
  background: #f0f0f0;
  gap: 3px;
  border-bottom: 2px solid #ccc;
  box-sizing: border-box;
  white-space: nowrap;
  ${listFont}
`;
const FindInput = styled.span`
  flex: none;
  width: 682px;
  height: 20px;
  margin-left: 4px;
  background: #fff;
  display: flex;
  align-items: center;
  padding-left: 4px;
  box-sizing: border-box;
`;
const CloseBox = styled.span`
  flex: none;
  width: 13px;
  height: 16px;
  background: #fff;
  border: 1px solid #999;
  text-align: center;
  line-height: 14px;
  font-size: 13px;
  box-sizing: border-box;
`;
const Check = styled.span`
  flex: none;
  width: 12px;
  height: 14px;
  border: 1px solid #777;
  background: #fff;
  font-size: 11px;
  line-height: 13px;
  text-align: center;
  margin-left: ${(p) => p.$ml || 0}px;
`;
const Curly = styled.span`
  color: #900;
  font-size: 14px;
  margin: 0 6px;
`;
const SearchFor = styled.span`
  flex: none;
  margin-left: 4px;
`;
const FindBtn = styled(Slot)`
  background: #fff;
  border-right: 1px solid #888;
  border-bottom: 1px solid #888;
`;
const TriDown = styled.span`
  margin: 0 8px 0 4px;
  border-left: 4px solid transparent;
  border-right: 4px solid transparent;
  border-top: 7px solid #000;
`;

const WavePanel = ({ rows, traces, active }) => (
  <RightCol>
    <PanelHead icon={<WaveIco />} title="Wave - Default" active={active} f1={50} f2={50} />
    <WaveBody>
      <NameCol>
        <NameTop><ObjsIco /><Drop /></NameTop>
        <ListArea $l={7}>
          {rows.map((r, i) => (
            <WaveRow key={i} $sel={r.sel}>
              <RowIcon>
                {r.exp && <RowExp $x={6}>+</RowExp>}
                <Diamond />
              </RowIcon>
              {r.n}
            </WaveRow>
          ))}
          <EndLine />
        </ListArea>
        <FootSep />
        <NowRow>
          <FootIcons><svg width="34" height="18"><path d="M3 2h6v12H3z" fill="#9ab" /><path d="M10 4h12v12H10z" fill="#6aa0e0" /><circle cx="27" cy="10" r="6" fill="#4ac060" /><path d="M24 10h6M27 7v6" stroke="#fff" /></svg></FootIcons>
          Now
        </NowRow>
        <CursorRow>
          <FootIcons><svg width="34" height="18"><path d="M3 7h9v10H3z" fill="#e8b840" /><path d="M5 7V3h5v4" fill="none" stroke="#bbb" /><path d="M15 14l6-12" stroke="#7ab" strokeWidth="2" /><circle cx="27" cy="9" r="6" fill="#e04040" /><path d="M24 9h6" stroke="#fff" /></svg></FootIcons>
          Cursor 1
        </CursorRow>
      </NameCol>
      <MsgCol>
        <ColTop>Msgs</ColTop>
        <ListArea $l={0}>
          {rows.map((r, i) => (
            <WaveRow key={i} $sel={r.sel}><MsgRowText>{r.v}</MsgRowText></WaveRow>
          ))}
          <EndLine />
        </ListArea>
        <FootSep />
        <MsgNow>500 ns</MsgNow>
        <MsgCursor>624 ns</MsgCursor>
      </MsgCol>
      <WavePlot traces={traces} />
      <WaveVBar>
        <VHead $h={21} $mb={2} />
        <VBtn $h={17}>▲</VBtn>
        <VFill />
        <VBtn $h={17}>▼</VBtn>
        <VHead $h={47} />
      </WaveVBar>
    </WaveBody>
    <WaveScrollRow>
      <NameScroll $w={321} $pl={7}>
        <ArrowBtn $c="#999">◀</ArrowBtn>
        <TrackFill />
        <ArrowBtn $c="#999">▶</ArrowBtn>
      </NameScroll>
      <NameScroll $w={40}>
        <ArrowBtn $w={20} $c="#777">◀</ArrowBtn>
        <ArrowBtn $w={20} $c="#777">▶</ArrowBtn>
      </NameScroll>
      <NameScroll $w={610}>
        <ArrowBtn>◀</ArrowBtn>
        <DarkTrack />
        <ArrowBtn>▶</ArrowBtn>
      </NameScroll>
    </WaveScrollRow>
    <FindRow>
      <CloseBox>X</CloseBox>
      <span>Find:</span>
      <FindInput><I n="binoc" s={14} /><Drop /></FindInput>
      <FindBtn $w={20}>
        <svg width="14" height="18"><path d="M7 1l6 8-6 8-6-8z" fill="#dce8f8" stroke="#7aa0d0" /></svg>
      </FindBtn>
      <Gap $w={1} />
      <FindBtn $w={20}><svg width="12" height="20"><path d="M6 1v14M2 11l4 7 4-7" stroke="#2a9a2a" strokeWidth="2" fill="none" /></svg></FindBtn>
      <FindBtn $w={20}><I n="docx" s={16} /></FindBtn>
      <Sep $w={10} />
      <SearchFor>Search For</SearchFor>
      <TriDown />
      <Sep $w={10} />
      <Check $ml={8} />
      <Curly>{"{a}"}</Curly>
      <Check $ml={6}>✓</Check>
      <I n="srch1" s={16} />
    </FindRow>
  </RightCol>
);

/* ---------- transcript ---------- */
const TranscriptBox = styled.div`
  flex: 1;
  display: flex;
  flex-direction: column;
  margin-top: 1px;
  min-height: 0;
  border-top: 3px solid #ccc;
`;
const TranscriptBody = styled.div`
  flex: 1;
  display: flex;
  min-height: 0;
  border-top: 2px solid #000;
  margin-left: 4px;
  margin-right: 11px;
  border-left: 1px solid #000;
`;
const TranscriptText = styled.div`
  flex: 1;
  padding: 3px 0 0 2px;
  background: #fff;
`;
const Line = styled.div`
  height: 15px;
  line-height: 15px;
  font-family: "Liberation Mono", monospace;
  font-size: 11.670px;
  white-space: pre;
  color: ${(p) => (p.$prompt ? "#000060" : "#1010f0")};
`;
const Prompt = styled.span`
  font-family: Roboto, sans-serif;
  font-size: 11.500px;
`;
const transcript = [
  "# ** Error: Test 1: Failed - LOCK should be '0' at default state",
  "#    Time: 20 ns  Iteration: 0  Instance: /tb_clock_gen",
  "# ** Error: Test 1: Failed - GL1 should be '0' at default state",
  "#    Time: 20 ns  Iteration: 0  Instance: /tb_clock_gen",
  "# ** Error: Test 5: Failed - GL1 should transition on falling edge of GL0",
  "#    Time: 327500 ps  Iteration: 0  Instance: /tb_clock_gen",
];
const Transcript = () => (
  <TranscriptBox>
    <PanelHead icon={<PersonIco />} title="Transcript" f1={92} f2={2} />
    <TranscriptBody>
      <TranscriptText>
        <Line $prompt><Prompt>VSIM 696&gt;</Prompt> run 500 ns</Line>
        {transcript.map((l, i) => <Line key={i}>{l}</Line>)}
        <Line $prompt><Prompt>VSIM 697&gt;</Prompt> run 5000000 ns</Line>
      </TranscriptText>
      <WaveVBar>
        <VBtn $h={17}>▲</VBtn>
        <VFill />
      </WaveVBar>
    </TranscriptBody>
  </TranscriptBox>
);

/* ---------- Paint ---------- */
const PaintTitle = styled.div`
  flex: none;
  height: 29px;
  display: flex;
  align-items: center;
  padding-right: 4px;
  padding-left: 12px;
`;
const PaintName = styled.span`
  margin-left: 8px;
  font-size: 15px;
  color: #777;
  border-left: 1px solid #888;
  padding-left: 7px;
  font-family: Roboto, sans-serif;
`;
const TabsRow = styled.div`
  flex: none;
  height: 28px;
  display: flex;
  align-items: stretch;
  position: relative;
  border-bottom: 2px solid #dadbdc;
  box-sizing: border-box;
  padding-right: 3px;
`;
const PTab = styled.span`
  flex: none;
  width: ${(p) => p.$w}px;
  display: flex;
  align-items: center;
  justify-content: center;
  font-size: 13px;
  color: ${(p) => (p.$file ? "#fff" : "#333")};
  background: ${(p) => (p.$file ? "#1979ca" : "#fff")};
  box-sizing: border-box;
  border: ${(p) => (p.$home ? "1px solid #dadbdc" : "none")};
  border-bottom: ${(p) => (p.$home ? "2px solid #f5f6f7" : "none")};
  margin-bottom: ${(p) => (p.$home ? "-2px" : 0)};
`;
const HelpGroup = styled.span`
  margin-left: auto;
  display: flex;
  align-items: center;
  gap: 10px;
`;
const HelpDot = styled.span`
  width: 20px;
  height: 20px;
  border-radius: 50%;
  background: #0063b1;
  color: #fff;
  font-weight: 700;
  font-size: 14px;
  text-align: center;
  line-height: 20px;
`;
const Ribbon = styled.div`
  flex: none;
  height: 113px;
  display: flex;
  background: #f5f6f7;
  border-bottom: ${(p) => (p.$strip ? "6px solid #c5d0e0" : "none")};
`;
const RibGroup = styled.div`
  flex: none;
  width: ${(p) => p.$w}px;
  box-sizing: border-box;
  display: flex;
  flex-direction: column;
  border-right: 1px solid #e2e3e4;
  margin: 4px 0;
`;
const RibBody = styled.div`
  flex: 1;
  display: flex;
  min-height: 0;
  padding-top: 1px;
`;
const RibLabel = styled.div`
  flex: none;
  height: 16px;
  margin-bottom: 2px;
  text-align: center;
  font-size: 13px;
  color: #6a6a6a;
  line-height: 16px;
`;
const BigTool = styled.div`
  flex: none;
  width: ${(p) => p.$w}px;
  margin-left: ${(p) => p.$ml || 0}px;
  display: flex;
  flex-direction: column;
  align-items: center;
  font-size: 13px;
  color: ${(p) => p.$c || "#333"};
  background: ${(p) => (p.$on ? "#cce0f5" : "transparent")};
  border: 1px solid ${(p) => (p.$on ? "#6aa6e0" : "transparent")};
  box-sizing: border-box;
  height: 82px;
  padding-top: ${(p) => p.$pt || 0}px;
`;
const BigLabel = styled.span`
  height: 17px;
  line-height: 17px;
`;
const Caret = styled.span`
  margin-top: 5px;
  border-left: 3px solid transparent;
  border-right: 3px solid transparent;
  border-top: 4px solid ${(p) => p.$c || "#333"};
`;
const SmallCol = styled.div`
  display: flex;
  flex-direction: column;
  padding-top: ${(p) => p.$pt}px;
  gap: ${(p) => p.$gap}px;
  margin-left: ${(p) => p.$ml}px;
  font-size: 13px;
`;
const SmallItem = styled.div`
  display: flex;
  align-items: center;
  gap: 3px;
  height: 24px;
  color: ${(p) => p.$c || "#333"};
`;
const ToolGrid = styled.div`
  display: grid;
  grid-template-columns: repeat(3, 27px);
  grid-template-rows: 37px 37px;
  margin: 9px 0 0 12px;
  align-items: center;
  justify-items: center;
`;
const SerifA = styled.span`
  font-family: "Liberation Serif", serif;
  font-weight: 700;
  font-size: 28px;
  color: #1a3a6a;
`;
const ShapesBox = styled.div`
  flex: none;
  margin: 5px 0 0 6px;
  width: 171px;
  height: 73px;
  background: #fff;
  border: 1px solid #dadbdc;
  display: grid;
  grid-template-columns: repeat(7, 24.400px);
  grid-auto-rows: 24px;
  align-items: center;
  justify-items: center;
`;
const ShapeScroll = styled.div`
  flex: none;
  width: 15px;
  height: 73px;
  margin-top: 5px;
  border: 1px solid #e2e3e4;
  border-left: none;
  display: flex;
  flex-direction: column;
  align-items: center;
  justify-content: space-around;
  font-size: 8px;
  color: #777;
`;
const SizeLines = styled.div`
  display: flex;
  flex-direction: column;
  gap: 6px;
  width: 40px;
  margin: 8px auto 0;
`;
const SizeLine = styled.span`
  height: ${(p) => p.$h}px;
  background: #7b8fb2;
`;
const SizeWrap = styled.div`
  width: 100%;
  height: 82px;
  display: flex;
  flex-direction: column;
  align-items: center;
  color: #999;
  font-size: 13px;
`;
const SizeLabel = styled.span`
  margin-top: 14px;
  height: 17px;
  line-height: 17px;
`;
const ColorBtn = styled(BigTool)`
  line-height: 17px;
`;
const BigSwatch = styled.span`
  flex: none;
  width: ${(p) => p.$w}px;
  height: ${(p) => p.$h}px;
  margin-top: ${(p) => p.$mt}px;
  margin-bottom: ${(p) => p.$mb}px;
  background: ${(p) => p.$c};
  outline: 1px solid #777;
  outline-offset: ${(p) => p.$off}px;
`;
const Palette = styled.div`
  flex: none;
  display: grid;
  grid-template-columns: repeat(10, 26px);
  grid-auto-rows: 26px;
  gap: 1.300px;
  margin: 1px 0 0 2px;
`;
const Swatch = styled.span`
  border: 1px solid #a0a0a0;
  padding: 1px;
  background-clip: content-box;
  background-color: ${(p) => p.$c || "#f5f6f7"};
`;
const EditTile = styled.span`
  flex: none;
  width: 36px;
  height: 37px;
  background: #fff;
  border: 1px solid #ccc;
  border-bottom: 2px solid #aaa;
  padding: 3px;
  box-sizing: border-box;
  display: flex;
  margin-bottom: 6px;
`;
const Rainbow = styled.span`
  flex: 1;
  background: linear-gradient(transparent 50%, #808080), linear-gradient(90deg, #f00, #ff0, #0f0, #0ff, #00f, #f0f);
`;
const TileLine = styled.span`
  height: 17px;
  line-height: 17px;
  white-space: nowrap;
`;

const shapePaths = [
  "M2 2L18 18", "M2 16C6 0 8 20 11 10S16 2 18 4", "M10 2a8 8 0 1 0 .01 0z", "M2 3h16v15H2z",
  "M5 3h10q3 0 3 3v9q0 3-3 3H5q-3 0-3-3V6q0-3 3-3z", "M6 2h11v7l-3 9H2z", "M10 2l8 16H2z",
  "M2 2v16h16z", "M10 1l8 9-8 9-8-9z", "M10 2l8 6-3 10H5L2 8z", "M6 1h8l4 5v8l-4 5H6l-4-5V6z",
  "M2 6h8V2l8 8-8 8v-4H2z", "M18 6h-8V2l-8 8 8 8v-4h8z", "M10 1l8 8h-4v9H6V9H2z",
  "M6 2h8v9h4l-8 8-8-8h4z", "M10 1l2 7 7 2-7 2-2 7-2-7-7-2 7-2z",
  "M10 1l2.600 6.200 6.600.5-5 4.300 1.600 6.500-5.800-3.500-5.800 3.500 1.600-6.500-5-4.300 6.600-.5z",
  "M10 1l2.500 4.500H18l-2.600 4.500 2.600 4.500h-5.500L10 19l-2.500-4.500H2l2.600-4.500L2 5.500h5.500z",
  "M2 2h16v12H9l-3 5v-5H2z", "M10 2a8 6.500 0 1 1-2 12.800L5 19l.5-5A8 6.500 0 0 1 10 2z",
  "M6 4q4-3 7 0 5 0 4 5 2 4-3 6-3 3-7 1l-3 3 0-4q-4-2-2-6-1-4 4-5z",
];
const palette = [
  "#000", "#7f7f7f", "#880015", "#ed1c24", "#ff7f27", "#fff200", "#22b14c", "#00a2e8", "#3f48cc", "#a349a4",
  "#fff", "#c3c3c3", "#b97a57", "#ffaec9", "#ffc90e", "#efe4b0", "#b5e61d", "#99d9ea", "#7092be", "#c8bfe7",
  null, null, null, null, null, null, null, null, null, null,
];

const R = ({ s = 20, children }) => <svg width={s} height={s} viewBox="0 0 24 24">{children}</svg>;
const PaintTools = () => (
  <ToolGrid>
    <R s={26}><path d="M4 23l2-7L17 2l4 3L9 20z" fill="#e8b848" stroke="#555" /><path d="M15 4l4 3" stroke="#c33" strokeWidth="3" /></R>
    <R s={26}><path d="M3 12l8-8 9 9-8 8z" fill="#cfe0f0" stroke="#3a6ea8" /><path d="M4 12q-2 5 1 8 3-2 2-7z" fill="#ef7a28" /></R>
    <SerifA>A</SerifA>
    <R s={26}><path d="M2 16L14 3q4-1 6 2l2 4-12 12q-5 2-8-5z" fill="#ef7a7a" stroke="#c86060" /></R>
    <R s={26}><path d="M3 22l2-6L14 7l3 3-9 9z" fill="#cfe0f0" stroke="#345" /><path d="M13 6l5-5 5 5-5 5z" fill="#2a4a7a" /></R>
    <R s={26}><circle cx="10" cy="9" r="7" fill="#fff" stroke="#667" strokeWidth="1.500" /><path d="M15 14l7 9" stroke="#a07030" strokeWidth="3" /></R>
  </ToolGrid>
);
const Paint = ({ title, strip, id }) => (
  <>
    <PaintTitle>
      <R s={22}><ellipse cx="12" cy="12" rx="9" ry="11" fill="#a8c8e8" stroke="#557" /><circle cx="8" cy="8" r="2" fill="#e04040" /><circle cx="13" cy="6" r="2" fill="#f0c040" /><circle cx="8" cy="15" r="2" fill="#40a040" /><path d="M16 20L22 1" stroke="#c08030" strokeWidth="2" /></R>
      <Sep $w={20} />
      <R s={20}><path d="M3 2h18v20H3z" fill="#8a5ab8" /><path d="M7 3h10v7H7z" fill="#eee" /><path d="M8 15h8v6H8z" fill="#cfd6ea" /></R>
      <Gap $w={4} />
      <R s={24}><path d="M4 4h10q7 0 7 8t-8 10v-5q3 0 3-5t-3-4H9v4L2 7z" fill="#2a80d8" /></R>
      <Gap $w={2} />
      <R s={24}><path d="M20 4H10q-7 0-7 8t8 10v-5q-3 0-3-5t3-4h4v4l7-5z" fill="#a8c0d8" /></R>
      <Gap $w={3} />
      <svg width="10" height="12"><path d="M1 3h8M2 6l3 4 3-4z" stroke="#000" /></svg>
      <PaintName>{title}</PaintName>
      <WinControls w={58} c="#777" />
    </PaintTitle>
    <TabsRow>
      <PTab $w={70} $file>File</PTab>
      <PTab $w={68} $home>Home</PTab>
      <PTab $w={58}>View</PTab>
      <HelpGroup>
        <svg width="16" height="12"><path d="M1 10l7-8 7 8" fill="none" stroke="#888" strokeWidth="1.500" /></svg>
        <HelpDot>?</HelpDot>
      </HelpGroup>
    </TabsRow>
    <Ribbon $strip={strip}>
      <RibGroup $w={124}>
        <RibBody>
          <BigTool $w={40} $ml={15} $pt={3}>
            <svg width="32" height="40" viewBox="0 0 36 44"><path d="M2 4h32v39H2z" fill="#b08850" /><path d="M5 7h26v33H5z" fill="#fff" /><path d="M8 13h20M8 18h20M8 23h20M8 28h20M8 33h20" stroke="#888" /><path d="M12 1h12v7H12z" fill="#8a98a8" /></svg>
            <Gap $w={1} />
            <BigLabel>Paste</BigLabel>
            <Caret />
          </BigTool>
          <SmallCol $pt={10} $gap={3} $ml={6}>
            <SmallItem $c="#999"><R s={24}><path d="M8 1l6 13M16 1l-6 13" stroke="#9aa" strokeWidth="2" /><circle cx="7" cy="18" r="4" fill="none" stroke="#9aa" strokeWidth="2" /><circle cx="17" cy="18" r="4" fill="none" stroke="#9aa" strokeWidth="2" /></R>Cut</SmallItem>
            <SmallItem $c="#999"><R s={24}><path d="M3 2h11v14H3zM9 8h11v15H9z" fill="#eef" stroke="#bcd" /></R>Copy</SmallItem>
          </SmallCol>
        </RibBody>
        <RibLabel>Clipboard</RibLabel>
      </RibGroup>
      <RibGroup $w={141}>
        <RibBody>
          <BigTool $w={50} $ml={5} $on $pt={5}>
            <svg width="36" height="38"><rect x="1" y="1" width="34" height="36" fill="#cde1f7" stroke="#234a90" strokeDasharray="2 1" /></svg>
            <Gap $w={1} />
            <BigLabel>Select</BigLabel>
            <Caret />
          </BigTool>
          <SmallCol $pt={5} $gap={2} $ml={3}>
            <SmallItem $c="#999"><R s={22}><path d="M5 1v17h17M1 5h17v17" fill="none" stroke="#9ab" strokeWidth="1.500" /></R>Crop</SmallItem>
            <SmallItem><R s={22}><path d="M2 10h11v12H2z" fill="#fff" stroke="#1c5fb0" /><path d="M9 2h12v12H9z" fill="none" stroke="#1c5fb0" strokeWidth="1.500" /></R>Resize</SmallItem>
            <SmallItem><R s={22}><path d="M2 21L20 5v16z" fill="#bcc8d4" /><path d="M5 12V3l4 3" fill="none" stroke="#1c5fb0" strokeWidth="1.500" /></R>Rotate<Caret /></SmallItem>
          </SmallCol>
        </RibBody>
        <RibLabel>Image</RibLabel>
      </RibGroup>
      <RibGroup $w={96}>
        <RibBody><PaintTools /></RibBody>
        <RibLabel>Tools</RibLabel>
      </RibGroup>
      <RibGroup $w={62}>
        <RibBody>
          <BigTool $w={60} $pt={3}>
            <svg width="42" height="40" viewBox="0 0 42 42"><path d="M0 0h42v42H0z" fill="#fff" stroke="#aaa" /><path d="M40 3L24 24l-5-3z" fill="#8a98a8" /><path d="M18 20q10 1 9 10t-12 9q-9-10 3-19z" fill="#a07a4a" /><path d="M8 12q-6 16 8 27l4-3Q8 26 8 12z" fill="#ef6a20" /></svg>
            <BigLabel>Brushes</BigLabel>
            <Caret />
          </BigTool>
        </RibBody>
        <RibLabel> </RibLabel>
      </RibGroup>
      <RibGroup $w={286}>
        <RibBody>
          <ShapesBox>
            {shapePaths.map((d, i) => (
              <svg key={i} width="22" height="22" viewBox="0 0 20 20"><path d={d} fill="none" stroke="#1c5fa8" strokeWidth="1.100" /></svg>
            ))}
          </ShapesBox>
          <ShapeScroll><span>▲</span><span>▼</span><span>▼</span></ShapeScroll>
          <SmallCol $pt={5} $gap={2} $ml={6}>
            <SmallItem $c="#999"><R s={22}><path d="M2 22l3-8L16 3l4 4L9 18z" fill="#fff" stroke="#8ab" /></R>Outline<Caret $c="#999" /></SmallItem>
            <SmallItem $c="#999"><R s={22}><path d="M3 14l9-10 8 10-8 7z" fill="#cde" stroke="#abc" /><path d="M1 21h22v3H1z" fill="#bcd" /></R>Fill<Caret $c="#999" /></SmallItem>
          </SmallCol>
        </RibBody>
        <RibLabel>Shapes</RibLabel>
      </RibGroup>
      <RibGroup $w={62}>
        <RibBody>
          <SizeWrap>
            <SizeLines>
              <SizeLine $h={2} /><SizeLine $h={3} /><SizeLine $h={5} /><SizeLine $h={8} />
            </SizeLines>
            <SizeLabel>Size</SizeLabel>
            <Caret $c="#aaa" />
          </SizeWrap>
        </RibBody>
        <RibLabel> </RibLabel>
      </RibGroup>
      <RibGroup $w={435}>
        <RibBody>
          <ColorBtn $w={50} $ml={5} $on>
            <BigSwatch $w={36} $h={38} $mt={3} $mb={5} $c="#000" $off={2} />
            <span>Color</span>
            <span>1</span>
          </ColorBtn>
          <ColorBtn $w={46} $ml={3}>
            <BigSwatch $w={28} $h={28} $mt={9} $mb={9} $c="#fff" $off={0} />
            <span>Color</span>
            <span>2</span>
          </ColorBtn>
          <Palette>
            {palette.map((c, i) => <Swatch key={i} $c={c} />)}
          </Palette>
          <BigTool $w={52} $ml={3} $pt={3}>
            <EditTile><Rainbow /></EditTile>
            <TileLine>Edit</TileLine>
            <TileLine>colors</TileLine>
          </BigTool>
        </RibBody>
        <RibLabel>Colors</RibLabel>
      </RibGroup>
      <RibGroup $w={67}>
        <RibBody>
          <BigTool $w={62} $pt={3}>
            <EditTile>
              <svg width="28" height="30" viewBox="0 0 28 30">
                <defs>
                  <linearGradient id={id} x1="0" y1="0" x2="1" y2="1">
                    <stop offset="0" stopColor="#18b8e8" />
                    <stop offset=".5" stopColor="#9050d8" />
                    <stop offset=".8" stopColor="#f04070" />
                    <stop offset="1" stopColor="#f8b020" />
                  </linearGradient>
                </defs>
                <path d="M14 1q11 2 9 13-2 8-8 15Q4 18 5 10q1-8 9-9z" fill={`url(#${id})`} />
              </svg>
            </EditTile>
            <TileLine>Edit with</TileLine>
            <TileLine>Paint 3D</TileLine>
          </BigTool>
        </RibBody>
        <RibLabel> </RibLabel>
      </RibGroup>
    </Ribbon>
  </>
);

const BehindStrip = styled.div`
  position: absolute;
  left: 1920px;
  top: 455px;
  width: 1900px;
  height: 7px;
  overflow: hidden;
  display: flex;
  background: #fff;
`;
const BehindName = styled.span`
  flex: none;
  width: 383px;
  padding-left: 64px;
  box-sizing: border-box;
  ${listFont}
  line-height: 0;
  height: 0;
  margin-top: 4px;
`;
const BehindBlack = styled.span`
  flex: 1;
  background: linear-gradient(#000 3px, #ff0000 3px 5px, #000 5px);
`;

/* ---------- ModelSim main window ---------- */
const MainArea = styled.div`
  flex: none;
  height: 645px;
  display: flex;
  margin-top: 1px;
  background: #efefef;
`;
const ModelSimHead = ({ title = "ModelSim Microsemi Pro 2022.2", menus, pl, pr }) => (
  <>
    <TitleRow $h={22} $pl={pl} $pr={pr}>
      <MLogo>M</MLogo>
      <TitleText>{title}</TitleText>
      <WinControls />
    </TitleRow>
    <MenuRow $h={22} $pl={pl + 4}>
      {menus.map((m) => <span key={m}>{m}</span>)}
    </MenuRow>
  </>
);

const menuWave = ["File", "Edit", "View", "Compile", "Simulate", "Add", "Wave", "Tools", "Layout", "Bookmarks", "Window", "Help"];
const menuTranscript = ["File", "Edit", "View", "Compile", "Simulate", "Add", "Transcript", "Tools", "Layout", "Bookmarks", "Window", "Help"];

/* data */
const simClock = [
  { name: "tb_clock_gen", du: "tb_clock_g...", type: "Architecture", top: "DU Instance", sel: true },
  { name: "uut", du: "clock_gen(...", type: "Architecture", top: "DU Instance", d: 2, exp: true },
  { name: "CLK1_PAD_process", du: "tb_clock_g...", type: "Process", top: "-", d: 2, ball: true },
  { name: "stimulus_process", du: "tb_clock_g...", type: "Process", top: "-", d: 2, ball: true, end: true },
  { name: "standard", du: "standard", type: "Package", top: "Package" },
  { name: "textio", du: "textio", type: "Package", top: "Package" },
  { name: "std_logic_1164", du: "std_logic_1...", type: "Package", top: "Package" },
];
const simControl = [
  { name: "tb_controlio", du: "tb_controli...", type: "Architecture", top: "DU Instance", sel: true },
  { name: "DUT", du: "controlio(c...", type: "Architecture", top: "DU Instance", d: 2, exp: true },
  { name: "test", du: "tb_controli...", type: "Process", top: "-", d: 2, ball: true, end: true },
  { name: "standard", du: "standard", type: "Package", top: "Package" },
  { name: "textio", du: "textio", type: "Package", top: "Package" },
  { name: "std_logic_1164", du: "std_logic_1...", type: "Package", top: "Package" },
  { name: "std_logic_arith", du: "std_logic_a...", type: "Package", top: "Package" },
  { name: "std_logic_unsigned", du: "std_logic_u...", type: "Package", top: "Package" },
];
const objClock = [
  ["CLK1_PAD", "0"], ["PLL_ARST_N", "0"], ["PLL_POWERDOWN_N", "0"], ["GL0", "1"], ["GL1", "1"], ["GL2", "1"], ["LOCK", "1"],
  ["CLK1_PAD_period", "1000...", false, "Con..."],
];
const objControl = [
  ["RESET", "0"], ["H1_CLKWR", "0"], ["SysClk", "0"], ["Enable", "0"], ["SynchedTick", "0"],
  ["intDATA", "UUUU...", true], ["controlIoDataOut", "0000...", true],
  ["Axis0LEDStatusRead", "0"], ["Axis0LEDConfigWrite", "0"], ["Axis0IORead", "0"], ["Axis0IOWrite", "0"],
  ["Axis1LEDStatusRead", "0"], ["Axis1LEDConfigWrite", "0"], ["Axis1IORead", "0"], ["Axis1IOWrite", "0"],
  ["M_IO_OE", "1"], ["M_IO_LOAD", "0"], ["M_IO_LATCH", "0"],
];
const waveClock = [
  { n: "/tb_clock_gen/CLK1_PAD", v: "1" },
  { n: "/tb_clock_gen/PLL_ARST_N", v: "0" },
  { n: "/tb_clock_gen/PLL_POWERDOWN_N", v: "0" },
  { n: "/tb_clock_gen/GL0", v: "0" },
  { n: "/tb_clock_gen/GL1", v: "0" },
  { n: "/tb_clock_gen/GL2", v: "1" },
  { n: "/tb_clock_gen/LOCK", v: "1" },
  { n: "/tb_clock_gen/CLK1_PAD_period", v: "1000..." },
];
const traceClock = [
  { k: "wave", first: 13.100, half: 9.100, high: true },
  { k: "low" },
  { k: "low" },
  { k: "wave", first: 40.800, half: 36.400, high: false },
  { k: "wave", first: 22.300, half: 36.400, high: true, ticks: true },
  { k: "wave", first: 40.800, half: 72.900, high: true },
  { k: "high" },
  { k: "bus", label: "10000 ps", len: 43 },
];
const ctl = "/tb_controlio/";
const waveControl = [
  ["RESET", "0"], ["H1_CLKWR", "0"], ["SysClk", "0"], ["Enable", "0"], ["SynchedTick", "0"],
  ["intDATA", "UUU...", 1], ["controlIoDataOut", "0000...", 1],
  ["Axis0LEDStatusRead", "0"], ["Axis0LEDConfigWrite", "0"], ["Axis0IORead", "0"], ["Axis0IOWrite", "0"],
  ["Axis1LEDStatusRead", "0"], ["Axis1LEDConfigWrite", "0"], ["Axis1IORead", "0"], ["Axis1IOWrite", "0"],
  ["M_IO_OE", "1"], ["M_IO_LOAD", "0"], ["M_IO_LATCH", "0"], ["M_IO_CLK", "0"], ["M_IO_DATAOut", "0"],
  ["M_IO_DATAIn", "0", 0, 1], ["M_ENABLE", "00", 1], ["M_FAULT", "UU", 1], ["PowerUp", "0"], ["QUADPresent", "0"],
  ["QA0AxisFault", "UUU", 1], ["QA1AxisFault", "UUU", 1],
].map((r) => ({ n: ctl + r[0], v: r[1], exp: !!r[2], sel: !!r[3] }));
const traceControl = waveControl.map((r, i) => {
  if (i === 5) return { k: "red", label: "U".repeat(32), len: 224 };
  if (i === 6) return { k: "bus", label: "0".repeat(32), len: 192 };
  if (i === 15) return { k: "high" };
  if (i === 21) return { k: "bus", label: "00", len: 12 };
  if (i === 22) return { k: "red", label: "UU", len: 14 };
  if (i === 25 || i === 26) return { k: "red", label: "UUU", len: 21 };
  return { k: "low" };
});

const ModelSimBody = ({ sim, objects, procs, chip, scroll, wave, traces, active }) => (
  <MainArea>
    <SimPanel rows={sim} />
    <ObjectsColumn objects={objects} procs={procs} chip={chip} scroll={scroll} />
    <WavePanel rows={wave} traces={traces} active={active} />
  </MainArea>
);

/* ---------- top-left quad wave ---------- */
const QuadBody = styled.div`
  flex: 1;
  display: flex;
  min-height: 0;
  margin-top: 3px;
  padding-left: 5px;
  ${listFont}
`;
const QuadName = styled.div`
  flex: none;
  width: 321px;
  margin-right: 3px;
  display: flex;
  flex-direction: column;
`;
const QuadMsg = styled.div`
  flex: none;
  width: 41px;
  margin-right: 3px;
  display: flex;
  flex-direction: column;
`;
const QuadHead = styled(ColTop)`
  height: 19px;
  flex: none;
`;
const QuadHeadName = styled(QuadHead)`
  justify-content: flex-start;
  padding-left: 9px;
  gap: 3px;
`;
const QuadList = styled.div`
  flex: 1;
  overflow: hidden;
  margin-left: ${(p) => p.$l}px;
  background: #fff;
`;
const QuadRow = styled.div`
  height: 17px;
  display: flex;
  align-items: center;
  box-sizing: border-box;
  border-bottom: 1px solid #808080;
  white-space: nowrap;
  padding-left: ${(p) => p.$pad}px;
  gap: 6px;
`;
const QuadClip = styled.div`
  height: 8px;
  overflow: hidden;
  display: flex;
  align-items: flex-end;
  border-bottom: 1px solid #808080;
  padding-left: ${(p) => p.$pad}px;
  gap: 6px;
  line-height: 14px;
`;
const ClipInner = styled.span`
  display: block;
  height: 8px;
  overflow: hidden;
`;
const ClipText = styled.span`
  display: block;
  margin-top: -9px;
`;

const quadNames = ["Exp0Quad_Reg", "Exp0Quad_FaultA", "Exp0Quad_FaultB", "Exp1Quad_A", "Exp1Quad_B", "Exp1Quad_Reg", "Exp1Quad_FaultA"];
const quadGrid = Array.from({ length: 26 }, (_, k) => 429 + 58.400 * k - 385);

const QuadPlot = () => (
  <svg width="1527" height="141" viewBox="0 0 1527 141" shapeRendering="crispEdges" style={{ flex: "none", display: "block" }}>
    <rect width="1527" height="141" fill="#000" />
    <rect y="18" width="1527" height="3" fill="#e8e8e8" />
    {quadGrid.map((x) => <path key={x} d={`M${x} 21V141`} stroke="#7a7a7a" />)}
    {[36, 53, 70, 87, 104, 121, 138].map((y) => <rect key={y} x="-3" y={y} width="572" height="1.500" fill="#f00000" />)}
  </svg>
);

const QuadPanel = () => (
  <QuadBody>
    <QuadName>
      <QuadHeadName><ObjsIco /><Drop /></QuadHeadName>
      <QuadList $l={8}>
        <QuadClip $pad={5}><Diamond /><ClipInner><ClipText>/tb_quad/Exp0Quad_B</ClipText></ClipInner></QuadClip>
        {quadNames.map((n) => (
          <QuadRow key={n} $pad={5}><Diamond />/tb_quad/{n}</QuadRow>
        ))}
      </QuadList>
    </QuadName>
    <QuadMsg>
      <QuadHead>Msgs</QuadHead>
      <QuadList $l={0}>
        <QuadClip $pad={2}><ClipInner><ClipText>U</ClipText></ClipInner></QuadClip>
        {quadNames.map((n) => <QuadRow key={n} $pad={2}>U</QuadRow>)}
      </QuadList>
    </QuadMsg>
    <QuadPlot />
    <WaveVBar>
      <VHead $h={20} $mb={4} />
      <VBtn $h={13}>▲</VBtn>
      <VFill />
    </WaveVBar>
  </QuadBody>
);

const Spacer = styled.div`
  flex: none;
  height: ${(p) => p.$h}px;
`;

export default function App() {
  return (
    <Desktop>
      <Global />

      {/* Paint behind the tb_quad wave window */}
      <Win $x={1920} $y={0} $w={1920} $h={176}>
        <Paint title="tb_quad1.png - Paint" strip id="p3da" />
      </Win>

      <Sliver />
      <Win $x={7} $y={5} $w={1921} $h={280}>
        <TitleRow $h={29} $pl={10} $pr={0} $line>
          <WaveIco />
          <TitleText>Wave</TitleText>
          <WinControls />
        </TitleRow>
        <MenuRow $h={23} $pl={8}>
          {["File", "Edit", "View", "Add", "Format", "Tools", "Bookmarks", "Window", "Help"].map((m) => <span key={m}>{m}</span>)}
        </MenuRow>
        <PanelHead icon={<WaveIco />} title="Wave - Default" active f1={50} f2={1} />
        <Tools rows={waveTools} pl={3} />
        <QuadPanel />
      </Win>

      {/* tb_clock_gen session */}
      <Win $x={0} $y={285} $w={1926} $h={915} $bg="#efefef">
        <ModelSimHead menus={menuWave} pl={3} pr={9} />
        <Tools rows={mainTools} />
        <Spacer $h={1} />
        <ModelSimBody
          sim={simClock}
          objects={objClock}
          procs={[["stimulus_process", "Done"], ["CLK1_PAD_proces...", "Ready"]]}
          chip={{ text: "Now" }}
          wave={waveClock}
          traces={traceClock}
          active
        />
        <Transcript />
      </Win>

      {/* ModelSim behind the second Paint */}
      <Win $x={1928} $y={176} $w={1912} $h={109} $bg="#efefef">
        <ModelSimHead menus={menuWave} pl={1} pr={0} />
        <Tools rows={mainTools} />
      </Win>
      <SideStrip $y={176} $h={109} $c="#c8c8c8">^</SideStrip>

      <Win $x={1920} $y={285} $w={1920} $h={170}>
        <Paint title="tb_controlio.png - Paint" id="p3db" />
      </Win>

      <BehindStrip>
        <BehindName>/tb_quad/Exp1Quad_FaultA</BehindName>
        <BehindBlack />
      </BehindStrip>

      {/* tb_controlio session */}
      <Win $x={1926} $y={462} $w={1914} $h={738} $bg="#efefef">
        <ModelSimHead menus={menuTranscript} pl={3} pr={0} />
        <Tools rows={mainTools} dim />
        <ModelSimBody
          sim={simControl}
          objects={objControl}
          procs={[["test", "Done"]]}
          chip={{ text: "5000275624  ps", mono: true }}
          scroll
          wave={waveControl}
          traces={traceControl}
        />
      </Win>
      <SideStrip $y={462} $h={223} $c="#fff" />
      <SideStrip $y={685} $h={295} $c="#c8c8c8" />
      <SideStrip $y={980} $h={220} $c="#fff" />
    </Desktop>
  );
}
